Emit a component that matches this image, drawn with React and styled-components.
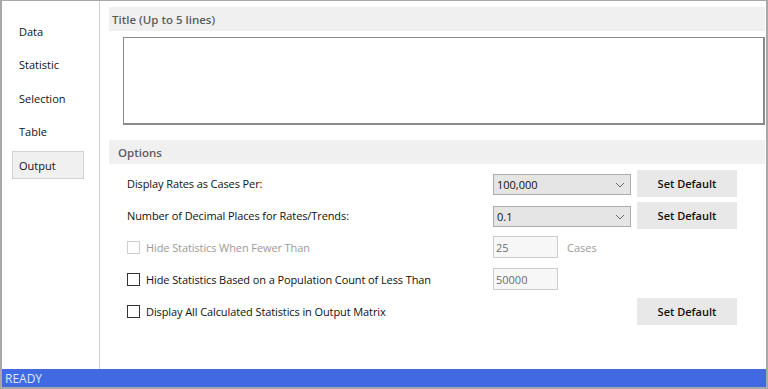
import styled, { createGlobalStyle } from "styled-components"

const Global = createGlobalStyle`
  html, body { margin: 0; padding: 0; background: #fff; }
  * { box-sizing: border-box; }
  body { font-family: "Open Sans", "Noto Sans", sans-serif; font-size: 11px; color: #111; }
`

const Window = styled.div`
  width: 768px;
  height: 389px;
  display: flex;
  flex-direction: column;
  border-top: 1px solid #a8a8a8;
  border-left: 2px solid #a8a8a8;
  border-right: 2px solid #a8a8a8;
  border-bottom: 2px solid #a8a8a8;
  background: #fff;
`

const Body = styled.div`
  flex: 1;
  display: flex;
  min-height: 0;
`

const Sidebar = styled.div`
  width: 98px;
  border-right: 1px solid #cfcfcf;
  padding: 16px 0 0 10px;
  display: flex;
  flex-direction: column;
  gap: 5.5px;
`

const NavItem = styled.div`
  width: 72px;
  height: 28px;
  display: flex;
  align-items: center;
  padding-left: 6px;
  border: 1px solid ${(p) => (p.$active ? "#d2d2d2" : "transparent")};
  background: ${(p) => (p.$active ? "#f0f0f0" : "transparent")};
  color: #111;
`

const Main = styled.div`
  flex: 1;
  padding: 6px 1px 0 9px;
  display: flex;
  flex-direction: column;
`

const Band = styled.div`
  height: 24px;
  background: #f0f0f0;
  display: flex;
  align-items: center;
  padding-left: ${(p) => p.$indent || 3}px;
  font-weight: 600;
  color: #5c5c5c;
  font-size: 11.5px;
  margin-top: ${(p) => p.$top || 0}px;
`

const TitleBox = styled.div`
  margin: 6px 0 0 14px;
  height: 88px;
  border: 1px solid #8a8a8a;
  border-right-width: 2px;
  border-bottom-width: 2px;
  background: #fff;
`

const Rows = styled.div`
  margin-top: 3px;
  padding-left: 18px;
  display: grid;
  grid-template-columns: 360px 138px 100px;
  grid-auto-rows: 32px;
  column-gap: 6px;
  align-items: center;
`

const Label = styled.div`
  display: flex;
  align-items: center;
  gap: 6px;
  letter-spacing: -0.1px;
  color: ${(p) => (p.$disabled ? "#9a9a9a" : "#111")};
`

const Check = styled.span`
  width: 13px;
  height: 13px;
  border: 1px solid ${(p) => (p.$disabled ? "#cfcfcf" : "#333")};
  background: #fff;
  flex-shrink: 0;
`

const Select = styled.div`
  height: 21px;
  margin-top: 3px;
  background: #e5e5e5;
  border: 1px solid #adadad;
  display: flex;
  align-items: center;
  justify-content: space-between;
  padding: 0 5px 0 3px;
  color: #111;
`

const Field = styled.div`
  display: flex;
  align-items: center;
  gap: 9px;
  color: #9a9a9a;
`

const Input = styled.div`
  width: 65px;
  height: 22px;
  border: 1px solid #cccccc;
  background: #f7f7f7;
  display: flex;
  align-items: center;
  padding-left: 2px;
  color: #6e6e6e;
`

const Button = styled.div`
  height: 27px;
  background: #e8e8e8;
  display: flex;
  align-items: center;
  justify-content: center;
  font-weight: 600;
  color: #111;
`

const Status = styled.div`
  height: 18px;
  background: #4169e1;
  color: #dfe6ff;
  display: flex;
  align-items: center;
  padding-left: 3px;
  font-size: 12px;
`

const Chevron = () => (
  <svg width="10" height="6" viewBox="0 0 10 6">
    <path d="M1 1 L5 5 L9 1" fill="none" stroke="#6a6a6a" strokeWidth="1" />
  </svg>
)

const Empty = styled.div``

export default function App() {
  return (
    <>
      <Global />
      <Window>
        <Body>
          <Sidebar>
            <NavItem>Data</NavItem>
            <NavItem>Statistic</NavItem>
            <NavItem>Selection</NavItem>
            <NavItem>Table</NavItem>
            <NavItem $active>Output</NavItem>
          </Sidebar>
          <Main>
            <Band>Title (Up to 5 lines)</Band>
            <TitleBox />
            <Band $top={15} $indent={9}>Options</Band>
            <Rows>
              <Label>Display Rates as Cases Per:</Label>
              <Select>100,000<Chevron /></Select>
              <Button>Set Default</Button>

              <Label>Number of Decimal Places for Rates/Trends:</Label>
              <Select>0.1<Chevron /></Select>
              <Button>Set Default</Button>

              <Label $disabled><Check $disabled />Hide Statistics When Fewer Than</Label>
              <Field><Input>25</Input>Cases</Field>
              <Empty />

              <Label><Check />Hide Statistics Based on a Population Count of Less Than</Label>
              <Field><Input>50000</Input></Field>
              <Empty />

              <Label><Check />Display All Calculated Statistics in Output Matrix</Label>
              <Empty />
              <Button>Set Default</Button>
            </Rows>
          </Main>
        </Body>
        <Status>READY</Status>
      </Window>
    </>
  )
}
